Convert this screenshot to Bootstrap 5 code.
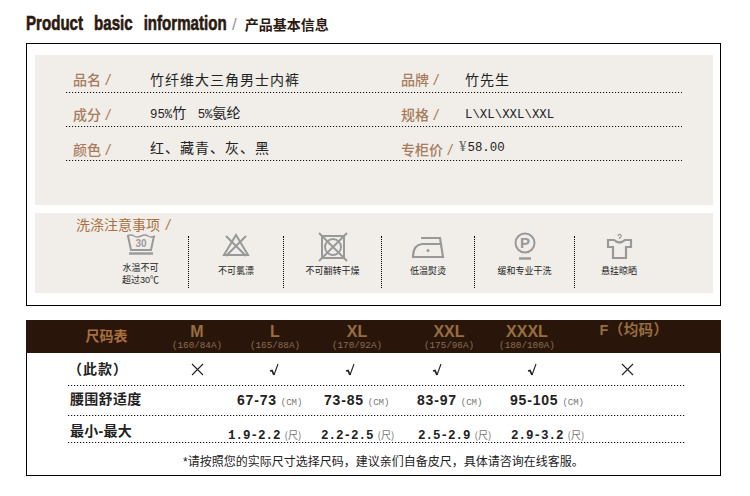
<!DOCTYPE html>
<html lang="zh">
<head>
<meta charset="utf-8">
<title>Product basic information</title>
<link href="https://cdn.jsdelivr.net/npm/bootstrap@5.3.0/dist/css/bootstrap.min.css" rel="stylesheet">
<style>
body{background:#fff;color:#222;font-family:"Liberation Sans","Noto Sans CJK SC",sans-serif;margin:0}
.sheet{width:695px;margin-left:26px}
.title-bar{height:43px;color:#2b1a10;padding-top:13px;line-height:20px;white-space:nowrap}
.title-en{font-weight:700;font-size:20px;word-spacing:9px;display:inline-block;width:206px;transform:scaleX(.755);transform-origin:0 50%;-webkit-text-stroke:.6px #2b1a10;overflow:visible}
.title-sl{color:#999;font-size:17px;font-weight:300;margin-right:8px}
.title-cn{font-size:14px;font-weight:700}
.box-a{height:263px;border:1px solid #000;padding:11px 7px 12px 8px}
.panel-info{height:150px;background:#f1eeea;padding:0 31px}
.info-row{height:34px;padding-bottom:2px;background:repeating-linear-gradient(to right,#111 0 1px,#ccc 1px 2px,transparent 2px 3px) bottom/100% 1px no-repeat}
.info-row:first-child{height:38px;padding-bottom:3px}
.info-row.row-c{padding-bottom:1px}
.lab{font-size:14px;font-weight:500;color:#a67c5c;padding-left:7px;width:84px;line-height:20px;flex:none}
.lab i{color:#a8703f;font-family:"Liberation Sans";font-weight:400;margin-left:5px}
.lab-two{width:64px;padding-left:0}
.lab-wide{width:58px;padding-left:0;white-space:nowrap}
.val{font-size:14px;letter-spacing:1px;color:#222;line-height:20px;white-space:nowrap;width:251px;flex:none}
.val-end{width:150px}
.val b{font-family:"Liberation Mono",monospace;font-weight:400;font-size:12.4px;letter-spacing:0}
.val-mid{letter-spacing:0}
.row-c .val{padding-bottom:2px}
.yen{font-family:"Liberation Serif",serif;font-size:15px;color:#666;margin-right:1px}
.panel-wash{height:80px;margin-top:8px;background:#f1eeea}
.wash-title{font-size:14px;color:#a8703f;line-height:14px;padding:5px 0 0 41px;height:23px}
.wash-title i{font-family:"Liberation Sans";margin-left:2px}
.wash-list{margin-left:58px}
.wash-item{height:52px;text-align:center;border-right:1px dotted #000;font-size:9px;line-height:12px;color:#222;flex:none}
.wash-item:last-child{border-right:0}
.wash-pic{height:29px;margin-top:-3px;display:flex;justify-content:center;align-items:flex-start}
.w1{width:96px}.w2{width:95px}.w3{width:98px}.w4{width:93px}.w5{width:100px}.w6{width:88px}
.wash-txt{margin-top:3px}
.w1 .wash-txt{margin-top:0}
.box-b{height:156px;margin-top:14px;border:1px solid #000;border-top:0}
.size-head{display:grid;grid-template-columns:131px 78px 78px 86px 98px 58px 154px;height:33px;background:#2a150b;color:#956f3f;text-align:center;margin:0 -1px;padding-left:1px}
.head-first{font-size:14px;font-weight:700;color:#a8703f;line-height:33px;padding-left:28px}
.head-sz{font-weight:700;font-size:16px;line-height:17px;padding-top:3px}
.head-sz small{display:block;font:400 9.3px/11px "Liberation Mono",monospace;color:#8a6e52;white-space:nowrap;margin:0 -10px}
.head-f{font-size:14.5px;letter-spacing:.4px;padding-top:2px;padding-left:2px}
.line-row{display:grid;margin:0 35px 0 41px;align-items:center;font-weight:700;color:#222;background:repeating-linear-gradient(to right,#111 0 1px,#ccc 1px 2px,transparent 2px 3px) bottom/100% 1px no-repeat}
.line-check{grid-template-columns:90px 78px 76px 76px 98px 92px 98px 1fr;height:33px;text-align:center}
.line-waist{grid-template-columns:169px 87px 93px 93px 1fr;height:30px;white-space:nowrap;padding-bottom:3px}
.line-range{grid-template-columns:160px 93px 97px 93px 1fr;height:27px;white-space:nowrap}
.line-range>div+div{padding-top:6px}
.row-name{font-size:14px;letter-spacing:.3px;padding-left:2px;text-align:left}
.line-check .row-name{padding-left:0;letter-spacing:1px}
.num{font-size:14px;letter-spacing:.8px}
.num-m{font-family:"Liberation Mono",monospace;font-size:12.5px;letter-spacing:0}
.unit{font:400 9px "Liberation Mono","Noto Sans CJK SC",monospace;color:#777;margin-left:4px}
.unit-c{font-family:"Noto Sans CJK SC",sans-serif;font-size:10px}
.note-line{font-size:12px;line-height:18px;text-align:left;padding:10px 0 0 156px;color:#222;white-space:nowrap}
svg{display:block;overflow:visible}
.tick{margin:0 auto}
</style>
</head>
<body>
<div class="sheet">
  <div class="title-bar"><span class="title-en">Product basic information</span><span class="title-sl">/</span><span class="title-cn">产品基本信息</span></div>

  <div class="box-a">
    <div class="panel-info">
      <div class="info-row d-flex align-items-end">
        <div class="lab">品名<i>/</i></div><div class="val">竹纤维大三角男士内裤</div>
        <div class="lab lab-two">品牌<i>/</i></div><div class="val val-end">竹先生</div>
      </div>
      <div class="info-row d-flex align-items-end">
        <div class="lab">成分<i>/</i></div><div class="val val-mid"><b>95%</b>竹 <b>&nbsp;5%</b>氨纶</div>
        <div class="lab lab-two">规格<i>/</i></div><div class="val val-mid val-end"><b>L\XL\XXL\XXL</b></div>
      </div>
      <div class="info-row row-c d-flex align-items-end">
        <div class="lab">颜色<i>/</i></div><div class="val">红、藏青、灰、黑</div>
        <div class="lab lab-wide">专柜价<i>/</i></div><div class="val val-mid val-end"><span class="yen">¥</span><b>58.00</b></div>
      </div>
    </div>

    <div class="panel-wash">
      <div class="wash-title">洗涤注意事项 <i>/</i></div>
      <div class="wash-list d-flex">
        <div class="wash-item w1">
          <div class="wash-pic"><svg width="30" height="22" viewBox="0 0 30 22" fill="none" stroke="#999"><path d="M1 3 Q5 1 8 3 T15 3 T22 3 T29 3" stroke-width="1.5"/><path d="M2 3 L5 17 H25 L28 3" stroke-width="2"/><path d="M3 20.5 H27" stroke-width="2.4"/><text x="15" y="14" text-anchor="middle" font-size="10" font-weight="700" fill="#999" stroke="none" font-family="Liberation Sans">30</text></svg></div>
          <div class="wash-txt">水温不可<br>超过30℃</div>
        </div>
        <div class="wash-item w2">
          <div class="wash-pic"><svg width="26" height="24" viewBox="0 0 26 24" fill="none" stroke="#999" stroke-width="2"><path d="M13 2 L25 22 H1 Z"/><path d="M3 3 L23 23 M23 3 L3 23"/></svg></div>
          <div class="wash-txt">不可氯漂</div>
        </div>
        <div class="wash-item w3">
          <div class="wash-pic"><svg width="28" height="28" viewBox="0 0 28 28" fill="none" stroke="#999" stroke-width="2"><rect x="3" y="3" width="22" height="22"/><circle cx="14" cy="14" r="8"/><path d="M0 0 L28 28 M28 0 L0 28"/></svg></div>
          <div class="wash-txt">不可翻转干燥</div>
        </div>
        <div class="wash-item w4">
          <div class="wash-pic pt-1"><svg width="32" height="21" viewBox="0 0 32 21" fill="none" stroke="#999" stroke-width="2.2"><path d="M9 1 H28 L31 20 H1 Q1 8 10 7 H29"/><circle cx="16" cy="13.5" r="1.5" fill="#999" stroke="none"/></svg></div>
          <div class="wash-txt">低温熨烫</div>
        </div>
        <div class="wash-item w5">
          <div class="wash-pic"><svg width="22" height="27" viewBox="0 0 22 27" fill="none" stroke="#999"><circle cx="11" cy="10" r="9.5" stroke-width="2"/><path d="M5 25.5 H17" stroke-width="2.4"/><text x="11" y="15" text-anchor="middle" font-size="15" font-weight="700" fill="#999" stroke="none" font-family="Liberation Sans">P</text></svg></div>
          <div class="wash-txt">缓和专业干洗</div>
        </div>
        <div class="wash-item w6">
          <div class="wash-pic"><svg width="27" height="26" viewBox="0 0 27 26" fill="none" stroke="#999" stroke-width="2.2"><path d="M13.5 6 V4.5 A1.6 1.6 0 1 0 12 3" stroke-width="1.2"/><path d="M8 7 H2 V14 H7 V25 H20 V14 H25 V7 H19 Q13.5 12 8 7 Z"/></svg></div>
          <div class="wash-txt">悬挂晾晒</div>
        </div>
      </div>
    </div>
  </div>

  <div class="box-b">
    <div class="size-head">
      <div class="head-first">尺码表</div>
      <div class="head-sz">M<small>(160/84A)</small></div>
      <div class="head-sz">L<small>(165/88A)</small></div>
      <div class="head-sz">XL<small>(170/92A)</small></div>
      <div class="head-sz">XXL<small>(175/96A)</small></div>
      <div class="head-sz">XXXL<small>(180/100A)</small></div>
      <div class="head-sz head-f">F（均码）</div>
    </div>

    <div class="line-row line-check">
      <div class="row-name">（此款）</div>
      <div><svg class="tick" width="13" height="13" viewBox="0 0 13 13" stroke="#222" stroke-width="1.1"><path d="M1 1 L12 12 M12 1 L1 12"/></svg></div>
      <div><svg class="tick" width="11" height="14" viewBox="0 0 11 14" fill="none" stroke="#222"><path d="M1 8 L3 7.5 L5 12" stroke-width="1.8"/><path d="M5 12 L9 1" stroke-width="1.1"/></svg></div>
      <div><svg class="tick" width="11" height="14" viewBox="0 0 11 14" fill="none" stroke="#222"><path d="M1 8 L3 7.5 L5 12" stroke-width="1.8"/><path d="M5 12 L9 1" stroke-width="1.1"/></svg></div>
      <div><svg class="tick" width="11" height="14" viewBox="0 0 11 14" fill="none" stroke="#222"><path d="M1 8 L3 7.5 L5 12" stroke-width="1.8"/><path d="M5 12 L9 1" stroke-width="1.1"/></svg></div>
      <div><svg class="tick" width="11" height="14" viewBox="0 0 11 14" fill="none" stroke="#222"><path d="M1 8 L3 7.5 L5 12" stroke-width="1.8"/><path d="M5 12 L9 1" stroke-width="1.1"/></svg></div>
      <div><svg class="tick" width="13" height="13" viewBox="0 0 13 13" stroke="#222" stroke-width="1.1"><path d="M1 1 L12 12 M12 1 L1 12"/></svg></div>
    </div>

    <div class="line-row line-waist">
      <div class="row-name">腰围舒适度</div>
      <div><span class="num">67-73</span><span class="unit">(CM)</span></div>
      <div><span class="num">73-85</span><span class="unit">(CM)</span></div>
      <div><span class="num">83-97</span><span class="unit">(CM)</span></div>
      <div><span class="num">95-105</span><span class="unit">(CM)</span></div>
    </div>

    <div class="line-row line-range">
      <div class="row-name">最小-最大</div>
      <div><span class="num-m">1.9-2.2</span><span class="unit unit-c">(尺)</span></div>
      <div><span class="num-m">2.2-2.5</span><span class="unit unit-c">(尺)</span></div>
      <div><span class="num-m">2.5-2.9</span><span class="unit unit-c">(尺)</span></div>
      <div><span class="num-m">2.9-3.2</span><span class="unit unit-c">(尺)</span></div>
    </div>

    <div class="note-line">*请按照您的实际尺寸选择尺码，建议亲们自备皮尺，具体请咨询在线客服。</div>
  </div>
</div>
<script src="https://cdn.jsdelivr.net/npm/bootstrap@5.3.0/dist/js/bootstrap.bundle.min.js"></script>
</body>
</html>
